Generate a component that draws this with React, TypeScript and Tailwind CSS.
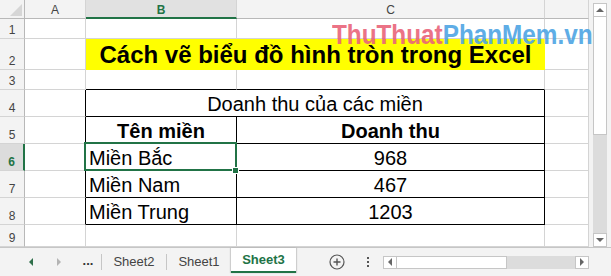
import React from "react";

const gridCell = "border-r border-b border-[#d4d4d4]";
const tableCell = "border-r border-b border-black";
const rowHead =
  "flex items-end justify-center pb-[2px] border-r border-b border-[#d4d4d4] border-r-[#b8b8b8] bg-[#f3f3f3] text-[12px] leading-none text-[#444]";
const colHead =
  "flex items-end justify-center pb-[2px] border-r border-b border-[#d4d4d4] border-b-[#b8b8b8] bg-[#f3f3f3] text-[12px] leading-none text-[#444]";
const body = "flex items-end text-[20px] leading-[23px] text-black";

const regions = [
  { name: "Miền Bắc", value: 968 },
  { name: "Miền Nam", value: 467 },
  { name: "Miền Trung", value: 1203 },
];

const Arrow: React.FC<{ dir: "up" | "down" | "left" | "right"; color?: string }> = ({ dir, color = "#666" }) => {
  const pts = {
    up: "0,5 4,1 8,5",
    down: "0,1 4,5 8,1",
    left: "5,0 1,4 5,8",
    right: "1,0 5,4 1,8",
  }[dir];
  const size = dir === "up" || dir === "down" ? { w: 8, h: 6 } : { w: 6, h: 8 };
  return (
    <svg width={size.w} height={size.h} viewBox={`0 0 ${size.w} ${size.h}`}>
      <polygon points={pts} fill={color} />
    </svg>
  );
};

const VScroll: React.FC = () => (
  <div className="w-[22px] h-[247px] bg-[#f3f3f3] pl-[4px] pt-[3px] flex">
    <div className="w-[14px] flex flex-col">
      <div className="h-[14px] bg-white border border-[#c6c6c6] flex items-center justify-center">
        <Arrow dir="up" />
      </div>
      <div className="h-[118px] bg-white border-x border-b border-[#c6c6c6]" />
      <div className="flex-1 bg-[#dcdcdc]" />
      <div className="h-[14px] bg-white border border-[#c6c6c6] flex items-center justify-center">
        <Arrow dir="down" />
      </div>
    </div>
  </div>
);

const TabBar: React.FC = () => (
  <div className="h-[29px] w-[611px] bg-[#f3f3f3] border-t border-[#c6c6c6] flex items-center text-[13px] text-[#444]">
    <div className="ml-[28px] flex">
      <Arrow dir="left" color="#2f6f4a" />
    </div>
    <div className="ml-[22px] flex">
      <Arrow dir="right" color="#b4b4b4" />
    </div>
    <div className="ml-[20px] w-[12px] text-center font-bold text-[#333] leading-none pb-[4px]">...</div>
    <div className="ml-[7px] w-px h-[16px] bg-[#c6c6c6]" />
    <div className="w-[64px] text-center">Sheet2</div>
    <div className="w-px h-[16px] bg-[#c6c6c6]" />
    <div className="w-[64px] text-center">Sheet1</div>
    <div className="self-start w-[65px] h-[25px] bg-white border-b-2 border-[#217346] shadow-[1px_0_1px_rgba(0,0,0,0.15),-1px_0_1px_rgba(0,0,0,0.15)] flex items-center justify-center font-bold text-[#217346]">
      Sheet3
    </div>
    <div className="ml-[33px] flex">
      <svg width="16" height="16" viewBox="0 0 16 16">
        <circle cx="8" cy="8" r="7" fill="none" stroke="#555" strokeWidth="1.2" />
        <path d="M8 4.5v7M4.5 8h7" stroke="#555" strokeWidth="1.4" />
      </svg>
    </div>
    <div className="ml-[22px] flex flex-col gap-[2px]">
      <span className="w-[2px] h-[2px] bg-[#555]" />
      <span className="w-[2px] h-[2px] bg-[#555]" />
      <span className="w-[2px] h-[2px] bg-[#555]" />
    </div>
    <div className="ml-[14px] w-[206px] h-[13px] flex">
      <div className="w-[14px] bg-white border border-[#c6c6c6] flex items-center justify-center">
        <Arrow dir="left" />
      </div>
      <div className="w-[110px] bg-white border-y border-r border-[#c6c6c6]" />
      <div className="flex-1 bg-[#dcdcdc]" />
      <div className="w-[14px] bg-white border border-[#c6c6c6] flex items-center justify-center">
        <Arrow dir="right" />
      </div>
    </div>
  </div>
);

export default function App() {
  return (
    <div className="relative w-[611px] h-[276px] overflow-hidden bg-white flex flex-col font-['Liberation_Sans',Arial,sans-serif]">
      <div className="flex h-[247px]">
        <div className="grid w-[589px] grid-cols-[25px_61px_151px_308px_44px] grid-rows-[19px_20px_31px_20px_27px_27px_27px_27px_27px_22px]">
          {/* column headers */}
          <div className="flex items-end justify-end pr-[2px] pb-[2px] border-r border-b border-[#b8b8b8] bg-[#f3f3f3]">
            <svg width="12" height="12" viewBox="0 0 12 12">
              <polygon points="0,12 12,12 12,0" fill="#d6d6d6" />
            </svg>
          </div>
          <div className={colHead}>A</div>
          <div className="flex items-end justify-center pb-[1px] border-r border-b-2 border-[#d4d4d4] border-b-[#217346] bg-[#e1e1e1] text-[12px] leading-none font-bold text-[#217346]">
            B
          </div>
          <div className={colHead}>C</div>
          <div className={colHead} />

          {/* row 1 */}
          <div className={rowHead}>1</div>
          <div className={gridCell} />
          <div className={gridCell} />
          <div className={gridCell} />
          <div className={gridCell} />

          {/* row 2 */}
          <div className={rowHead}>2</div>
          <div className={gridCell} />
          <div className="col-span-2 bg-[#ffff00] flex items-end justify-center pb-[1px] text-[24px] leading-[28px] font-bold text-black">
            Cách vẽ biểu đồ hình tròn trong Excel
          </div>
          <div className={gridCell} />

          {/* row 3 */}
          <div className={rowHead}>3</div>
          <div className={gridCell} />
          <div className={`${gridCell} border-b-black`} />
          <div className={`${gridCell} border-b-black`} />
          <div className={gridCell} />

          {/* row 4 */}
          <div className={rowHead}>4</div>
          <div className={`${gridCell} border-r-black`} />
          <div className={`col-span-2 ${tableCell} ${body} justify-center`}>Doanh thu của các miền</div>
          <div className={gridCell} />

          {/* row 5 */}
          <div className={rowHead}>5</div>
          <div className={`${gridCell} border-r-black`} />
          <div className={`${tableCell} ${body} justify-center font-bold`}>Tên miền</div>
          <div className={`${tableCell} ${body} justify-center font-bold`}>Doanh thu</div>
          <div className={gridCell} />

          {regions.map((r, i) => (
            <React.Fragment key={r.name}>
              {i === 0 ? (
                <div className="flex items-end justify-center pb-[2px] border-r-2 border-b border-[#d4d4d4] border-r-[#217346] bg-[#dcdcdc] text-[12px] leading-none font-bold text-[#217346]">
                  {i + 6}
                </div>
              ) : (
                <div className={rowHead}>{i + 6}</div>
              )}
              <div className={`${gridCell} border-r-black`} />
              <div className={`relative ${tableCell} ${body} pl-[3px]`}>
                {r.name}
                {i === 0 && (
                  <>
                    <div className="absolute z-10 left-[-2px] top-[-2px] w-[153px] h-[29px] border-2 border-[#217346]" />
                    <div className="absolute z-10 left-[146px] top-[23px] w-[7px] h-[7px] bg-[#217346] border border-white" />
                  </>
                )}
              </div>
              <div className={`${tableCell} ${body} justify-center`}>{r.value}</div>
              <div className={gridCell} />
            </React.Fragment>
          ))}

          {/* row 9 */}
          <div className={rowHead}>9</div>
          <div className={gridCell} />
          <div className={gridCell} />
          <div className={gridCell} />
          <div className={gridCell} />
        </div>
        <VScroll />
      </div>
      <TabBar />

      {/* watermark */}
      <div className="absolute left-[332px] top-[22px] origin-left scale-x-90 whitespace-nowrap text-[27px] leading-none font-bold opacity-90 font-['Liberation_Sans',Arial,sans-serif]">
        <span className="text-[#e9647a]">ThuThuat</span>
        <span className="text-[#4ea5e4]">PhanMem.vn</span>
      </div>
    </div>
  );
}
